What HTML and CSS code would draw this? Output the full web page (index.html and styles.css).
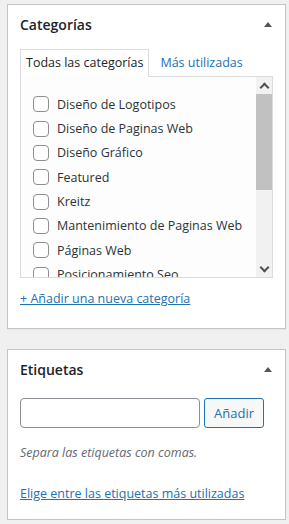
FILE: index.html
```html
<!DOCTYPE html>
<html lang="es">
<head>
<meta charset="utf-8">
<link rel="stylesheet" href="styles.css">
</head>
<body>
<div class="sidebar">
  <section class="postbox">
    <div class="postbox-header">
      <h2>Categorías</h2>
      <span class="toggle"></span>
    </div>
    <div class="inside">
      <ul class="tabs">
        <li class="tab active">Todas las categorías</li>
        <li class="tab"><a href="#">Más utilizadas</a></li>
      </ul>
      <div class="tabs-panel">
        <ul class="checklist">
          <li><span class="cb"></span>Diseño de Logotipos</li>
          <li><span class="cb"></span>Diseño de Paginas Web</li>
          <li><span class="cb"></span>Diseño Gráfico</li>
          <li><span class="cb"></span>Featured</li>
          <li><span class="cb"></span>Kreitz</li>
          <li><span class="cb"></span>Mantenimiento de Paginas Web</li>
          <li><span class="cb"></span>Páginas Web</li>
          <li><span class="cb"></span>Posicionamiento Seo</li>
        </ul>
        <div class="scrollbar">
          <span class="arrow up"></span>
          <div class="track"><div class="thumb"></div></div>
          <span class="arrow down"></span>
        </div>
      </div>
      <a class="add-link" href="#">+ Añadir una nueva categoría</a>
    </div>
  </section>

  <section class="postbox">
    <div class="postbox-header">
      <h2>Etiquetas</h2>
      <span class="toggle"></span>
    </div>
    <div class="inside tags">
      <div class="tag-row">
        <input class="tag-input" type="text">
        <button class="button">Añadir</button>
      </div>
      <p class="howto">Separa las etiquetas con comas.</p>
      <a class="cloud-link" href="#">Elige entre las etiquetas más utilizadas</a>
    </div>
  </section>
</div>
</body>
</html>
```

FILE: styles.css
```css
* { box-sizing: border-box; }
html, body { margin: 0; padding: 0; }
body {
  background: #f0f0f1;
  font-family: "Segoe UI", "Open Sans", "Noto Sans", sans-serif;
  font-size: 12.5px;
  color: #3c434a;
}
.sidebar {
  padding: 4px 3px 0 7px;
  display: flex;
  flex-direction: column;
  gap: 20px;
}
.postbox {
  background: #fff;
  border: 1px solid #c3c4c7;
  box-shadow: 0 1px 1px rgba(0,0,0,0.04);
}
.postbox-header {
  display: flex;
  align-items: center;
  justify-content: space-between;
  height: 38px;
  padding: 0 13px 0 12px;
}
.postbox-header h2 {
  margin: 0;
  font-size: 14px;
  font-weight: 600;
  color: #1d2327;
}
.toggle {
  width: 0; height: 0;
  border-left: 4px solid transparent;
  border-right: 4px solid transparent;
  border-bottom: 5px solid #50575e;
}
.inside { padding: 6px 12px 0 12px; height: 285px; }
.tabs {
  list-style: none;
  margin: 0;
  padding: 0;
  display: flex;
  height: 27px;
}
.tab {
  padding: 0 5px;
  line-height: 26px;
  border: 1px solid transparent;
  border-bottom: none;
}
.tab.active {
  border-color: #dcdcde;
  background: #fff;
  color: #1d2327;
  position: relative;
  z-index: 1;
  height: 28px;
}
.tab a { color: #2271b1; text-decoration: none; padding-left: 5px; }
.tabs-panel {
  border: 1px solid #dcdcde;
  background: #fdfdfd;
  height: 202px;
  display: flex;
  overflow: hidden;
}
.checklist {
  flex: 1;
  list-style: none;
  margin: 0;
  padding: 15px 0 0 12px;
  overflow: hidden;
}
.checklist li {
  display: flex;
  align-items: center;
  height: 24.35px;
  color: #2c3338;
  white-space: nowrap;
}
.cb {
  width: 16px; height: 16px;
  border: 1px solid #8c8f94;
  border-radius: 4px;
  background: #fff;
  margin-right: 8px;
  flex: none;
}
.scrollbar {
  width: 16px;
  flex: none;
  background: #f1f1f1;
  display: flex;
  flex-direction: column;
  align-items: center;
}
.arrow {
  height: 17px;
  width: 16px;
  display: flex;
  align-items: center;
  justify-content: center;
}
.arrow::before {
  content: "";
  width: 5px; height: 5px;
  border-left: 2px solid #505050;
  border-top: 2px solid #505050;
  transform: rotate(45deg);
  margin-top: 3px;
}
.arrow.down::before { transform: rotate(225deg); margin-top: -3px; }
.track { flex: 1; width: 100%; }
.thumb { width: 100%; height: 96px; background: #c1c1c1; }
.add-link {
  display: inline-block;
  margin-top: 12px;
  color: #2271b1;
  text-decoration: underline;
}
.inside.tags { height: auto; padding: 10px 12px 17px 12px; }
.tag-row { display: flex; gap: 4px; }
.tag-input {
  width: 180px; height: 30px;
  border: 1px solid #8c8f94;
  border-radius: 4px;
  background: #fff;
  margin: 0;
}
.button {
  height: 30px;
  width: 60px;
  border: 1px solid #2271b1;
  border-radius: 3px;
  background: #f6f7f7;
  color: #2271b1;
  font: inherit;
  font-size: 13px;
  padding: 0;
}
.howto {
  margin: 16px 0 0;
  font-style: italic;
  color: #646970;
}
.cloud-link {
  display: inline-block;
  margin-top: 24px;
  color: #2271b1;
  text-decoration: underline;
}
```
